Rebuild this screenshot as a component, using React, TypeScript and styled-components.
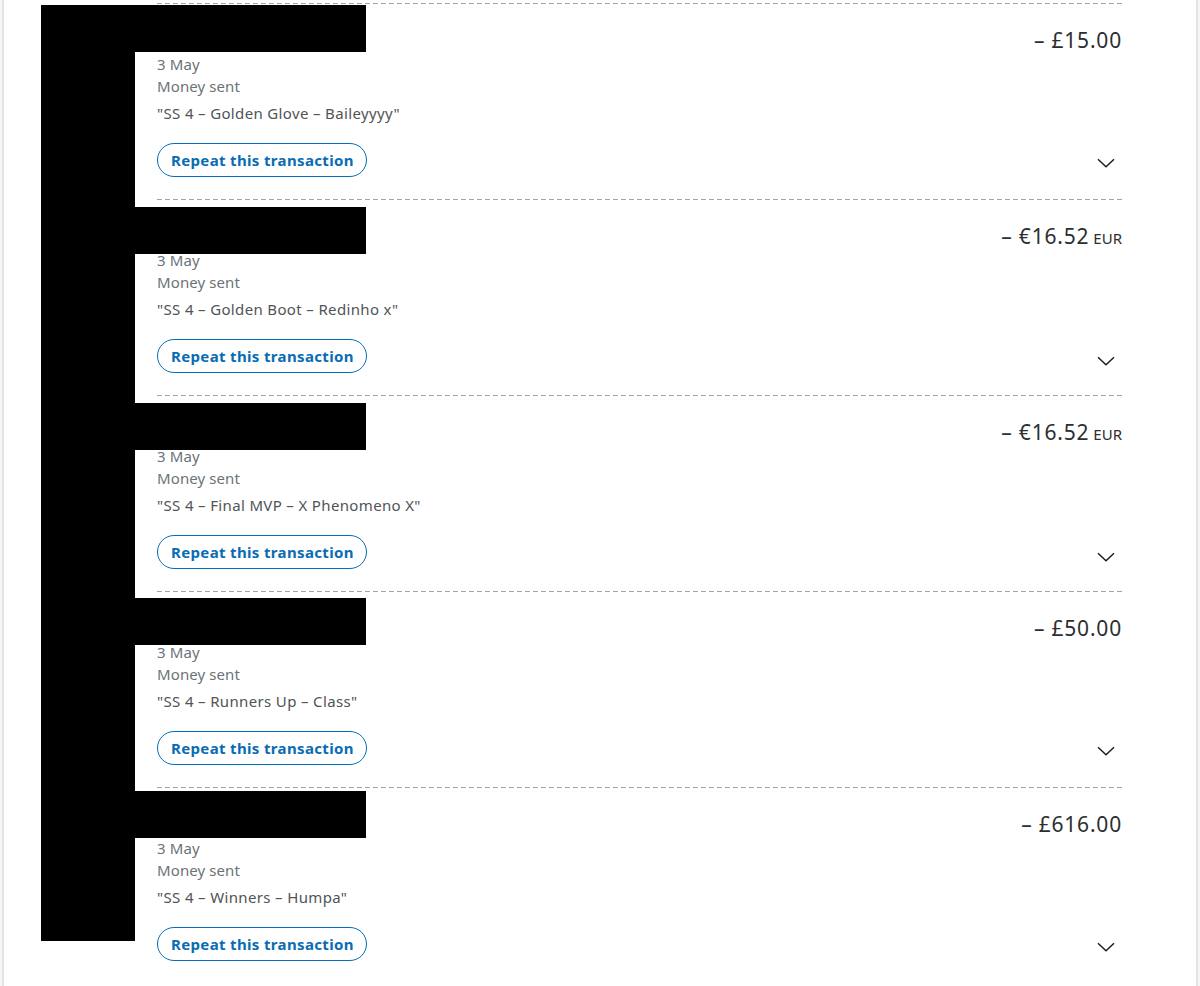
import styled, { createGlobalStyle } from "styled-components";

const GlobalStyle = createGlobalStyle`
  html, body {
    margin: 0;
    padding: 0;
    background: #ffffff;
  }
  body {
    font-family: "Noto Sans", "Open Sans", Arial, sans-serif;
  }
`;

const Page = styled.div`
  position: relative;
  width: 1200px;
  height: 986px;
  overflow: hidden;
  background: #f6f6f6;
`;

const Panel = styled.div`
  margin-left: 2px;
  width: 1192px;
  height: 986px;
  background: #ffffff;
  border-left: 2px solid #e4e4e4;
  border-right: 2px solid #e4e4e4;
`;

const List = styled.ul`
  list-style: none;
  margin: 0;
  padding: 3px 74px 0 153px;
`;

const Row = styled.li`
  position: relative;
  display: flex;
  justify-content: space-between;
  height: 196px;
  box-sizing: border-box;
  background-image: repeating-linear-gradient(
    to right,
    #a3a3a3 0,
    #a3a3a3 5px,
    transparent 5px,
    transparent 8px
  );
  background-size: 100% 1px;
  background-repeat: no-repeat;
  background-position: top left;
`;

const Details = styled.div`
  display: flex;
  flex-direction: column;
  align-items: flex-start;
  padding-top: 50px;
`;

const Meta = styled.div`
  font-size: 15px;
  line-height: 22px;
  color: #6c7378;
  letter-spacing: 0.1px;
`;

const Note = styled.div`
  margin-top: 5px;
  font-size: 15px;
  line-height: 22px;
  color: #4f5457;
  letter-spacing: 0.35px;
`;

const RepeatButton = styled.button`
  margin-top: 19px;
  height: 34px;
  width: 210px;
  padding: 0 13px;
  box-sizing: border-box;
  border: 1.5px solid #0070ba;
  border-radius: 17px;
  background: #ffffff;
  color: #0a6cb3;
  font-family: "Noto Sans", "Open Sans", Arial, sans-serif;
  font-size: 15px;
  font-weight: 700;
  letter-spacing: 0.35px;
  white-space: nowrap;
  text-align: left;
  cursor: pointer;
`;

const Side = styled.div`
  display: flex;
  flex-direction: column;
  align-items: flex-end;
  padding-top: 23px;
`;

const Amount = styled.div`
  font-size: 21px;
  line-height: 28px;
  color: #2c2e2f;
  letter-spacing: 0.8px;
  white-space: nowrap;
`;

const Currency = styled.span`
  margin-left: 4px;
  font-size: 15px;
  letter-spacing: 0;
`;

const Toggle = styled.button`
  margin-top: 103px;
  margin-right: 7px;
  padding: 0;
  width: 18px;
  height: 12px;
  border: none;
  background: none;
  display: flex;
  align-items: center;
  justify-content: center;
  cursor: pointer;
`;

const NameCensor = styled.div<{ $top: number }>`
  position: absolute;
  top: ${(p) => p.$top}px;
  left: -116px;
  width: 325px;
  height: 47px;
  background: #000000;
`;

const AvatarCensor = styled.div`
  position: absolute;
  left: 41px;
  top: 5px;
  width: 94px;
  height: 936px;
  background: #000000;
`;

type Tx = {
  amount: string;
  currency?: string;
  note: string;
  censorTop: number;
};

const transactions: Tx[] = [
  { amount: "– £15.00", note: "\"SS 4 – Golden Glove – Baileyyyy\"", censorTop: 2 },
  { amount: "– €16.52", currency: "EUR", note: "\"SS 4 – Golden Boot – Redinho x\"", censorTop: 8 },
  { amount: "– €16.52", currency: "EUR", note: "\"SS 4 – Final MVP – X Phenomeno X\"", censorTop: 8 },
  { amount: "– £50.00", note: "\"SS 4 – Runners Up – Class\"", censorTop: 7 },
  { amount: "– £616.00", note: "\"SS 4 – Winners – Humpa\"", censorTop: 4 },
];

function Chevron() {
  return (
    <svg width="18" height="10" viewBox="0 0 18 10" fill="none">
      <path d="M1 1.2 L9 8.8 L17 1.2" stroke="#1a1a1a" strokeWidth="1.4" />
    </svg>
  );
}

export default function App() {
  return (
    <>
      <GlobalStyle />
      <Page>
        <Panel>
          <List>
            {transactions.map((tx, i) => (
              <Row key={i}>
                <Details>
                  <Meta>3 May</Meta>
                  <Meta>Money sent</Meta>
                  <Note>{tx.note}</Note>
                  <RepeatButton>Repeat this transaction</RepeatButton>
                </Details>
                <Side>
                  <Amount>
                    {tx.amount}
                    {tx.currency && <Currency>{tx.currency}</Currency>}
                  </Amount>
                  <Toggle aria-label="Show details">
                    <Chevron />
                  </Toggle>
                </Side>
                <NameCensor $top={tx.censorTop} />
              </Row>
            ))}
          </List>
        </Panel>
        <AvatarCensor />
      </Page>
    </>
  );
}
